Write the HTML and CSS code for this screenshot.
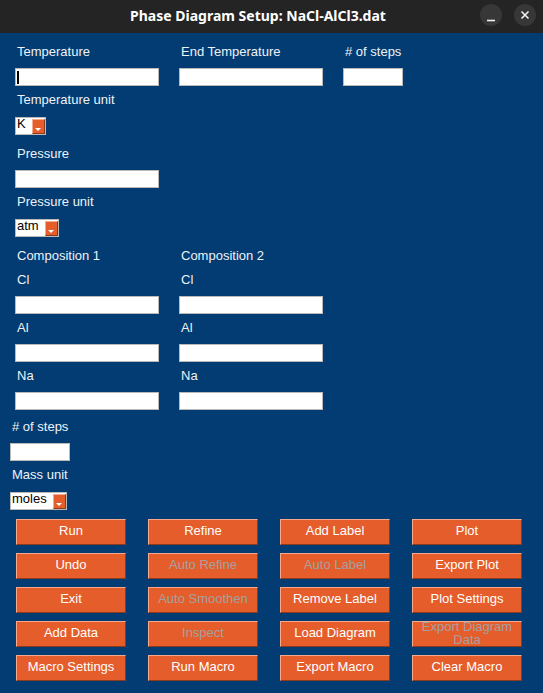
FILE: index.html
```html
<!DOCTYPE html>
<html>
<head>
<meta charset="utf-8">
<title>Phase Diagram Setup</title>
<link rel="stylesheet" href="styles.css">
</head>
<body>
<div class="window">
  <header class="titlebar">
    <div class="title">Phase Diagram Setup: NaCl-AlCl3.dat</div>
    <div class="controls">
      <span class="ctl"><svg width="22" height="22" viewBox="0 0 22 22"><path d="M7 16.5h8" stroke="#f2f2f2" stroke-width="1.6"/></svg></span>
      <span class="ctl"><svg width="22" height="22" viewBox="0 0 22 22"><path d="M7.5 7.5l7 7M14.5 7.5l-7 7" stroke="#f2f2f2" stroke-width="1.6"/></svg></span>
    </div>
  </header>

  <main class="content">
    <section class="form form-top">
      <div class="grid3 lbl-row first">
        <div class="lbl">Temperature</div>
        <div class="lbl">End Temperature</div>
        <div class="lbl"># of steps</div>
      </div>
      <div class="grid3 field-row">
        <div class="entry"><span class="caret"></span></div>
        <div class="entry"></div>
        <div class="entry"></div>
      </div>

      <div class="lbl-row"><div class="lbl">Temperature unit</div></div>
      <div class="field-row">
        <div class="menu"><span class="menu-text">K</span><span class="indicator"></span></div>
      </div>

      <div class="lbl-row gap-12"><div class="lbl">Pressure</div></div>
      <div class="grid3 field-row"><div class="entry"></div></div>

      <div class="lbl-row"><div class="lbl">Pressure unit</div></div>
      <div class="field-row">
        <div class="menu"><span class="menu-text">atm</span><span class="indicator"></span></div>
      </div>

      <div class="grid3 lbl-row gap-12">
        <div class="lbl">Composition 1</div>
        <div class="lbl">Composition 2</div>
      </div>
      <div class="grid3 lbl-row gap-8">
        <div class="lbl">Cl</div>
        <div class="lbl">Cl</div>
      </div>
      <div class="grid3 field-row">
        <div class="entry"></div>
        <div class="entry"></div>
      </div>
      <div class="grid3 lbl-row">
        <div class="lbl">Al</div>
        <div class="lbl">Al</div>
      </div>
      <div class="grid3 field-row">
        <div class="entry"></div>
        <div class="entry"></div>
      </div>
      <div class="grid3 lbl-row">
        <div class="lbl">Na</div>
        <div class="lbl">Na</div>
      </div>
      <div class="grid3 field-row">
        <div class="entry"></div>
        <div class="entry"></div>
      </div>
    </section>

    <section class="form form-bottom">
      <div class="lbl-row gap-9"><div class="lbl">#&nbsp;of steps</div></div>
      <div class="field-row"><div class="entry steps"></div></div>
      <div class="lbl-row"><div class="lbl">Mass unit</div></div>
      <div class="field-row">
        <div class="menu"><span class="menu-text">moles</span><span class="indicator"></span></div>
      </div>
    </section>

    <section class="buttons">
      <div class="btn">Run</div>
      <div class="btn">Refine</div>
      <div class="btn">Add Label</div>
      <div class="btn">Plot</div>

      <div class="btn">Undo</div>
      <div class="btn disabled">Auto Refine</div>
      <div class="btn disabled">Auto Label</div>
      <div class="btn">Export Plot</div>

      <div class="btn">Exit</div>
      <div class="btn disabled">Auto Smoothen</div>
      <div class="btn">Remove Label</div>
      <div class="btn">Plot Settings</div>

      <div class="btn">Add Data</div>
      <div class="btn disabled">Inspect</div>
      <div class="btn">Load Diagram</div>
      <div class="btn disabled two-line">Export Diagram Data</div>

      <div class="btn">Macro Settings</div>
      <div class="btn">Run Macro</div>
      <div class="btn">Export Macro</div>
      <div class="btn">Clear Macro</div>
    </section>
  </main>
</div>
</body>
</html>
```

FILE: styles.css
```css
* { box-sizing: border-box; }

html, body {
  margin: 0;
  padding: 0;
  width: 543px;
  height: 693px;
  overflow: hidden;
  background: #023c72;
}

.window {
  width: 543px;
  height: 693px;
  background: #023c72;
  font-family: "Liberation Sans", Arial, sans-serif;
  font-size: 13px;
}

/* title bar */
.titlebar {
  height: 33px;
  background: #242424;
  display: flex;
  align-items: center;
}

.title {
  flex: 1;
  padding-left: 38px;
  text-align: center;
  color: #ffffff;
  font-family: "Noto Sans", "DejaVu Sans", sans-serif;
  font-weight: 700;
  font-size: 14px;
  line-height: 20px;
  margin-top: -1px;
}

.controls {
  display: flex;
  gap: 12px;
  padding-right: 7px;
  padding-left: 2px;
  margin-top: -3px;
}

.ctl {
  width: 22px;
  height: 22px;
  border-radius: 50%;
  background: #373737;
  display: block;
}

.ctl svg { display: block; }

/* form */
.form-top { padding-left: 15px; }
.form-bottom { padding-left: 10px; }

.grid3 {
  display: grid;
  grid-template-columns: 144px 144px 60px;
  column-gap: 20px;
}

.lbl-row { margin-top: 6px; height: 16px; }
.lbl-row.first { margin-top: 11px; }
.lbl-row.gap-12 { margin-top: 12px; }
.lbl-row.gap-9 { margin-top: 9px; }
.lbl-row.gap-8 { margin-top: 8px; }

.lbl {
  height: 16px;
  line-height: 16px;
  padding-left: 2px;
  color: #eef2f7;
  white-space: nowrap;
}

.field-row { margin-top: 8px; height: 18px; }

.entry {
  height: 18px;
  background: #ffffff;
  border: 1px solid #b9b9b9;
  display: flex;
  align-items: center;
  padding-left: 1px;
}

.entry.steps { width: 60px; }

.caret {
  width: 2px;
  height: 13px;
  background: #000000;
}

.menu {
  display: inline-flex;
  align-items: flex-start;
  height: 18px;
  background: #ffffff;
  border: 1px solid #b9b9b9;
  padding-left: 1px;
}

.menu-text {
  color: #000000;
  line-height: 12px;
  margin-right: 6px;
}

.indicator {
  width: 13px;
  height: 15px;
  margin-top: 0.5px;
  background: #e45d2b;
  border-style: solid;
  border-width: 1px;
  border-color: #f6a98c #8b3a1b #8b3a1b #f6a98c;
  display: flex;
  justify-content: center;
  align-items: flex-end;
  padding-bottom: 2px;
}

.indicator::after {
  content: "";
  width: 0;
  height: 0;
  border-left: 3px solid transparent;
  border-right: 3px solid transparent;
  border-top: 3px solid #ffffff;
}

/* buttons */
.buttons {
  margin-top: 10px;
  padding-left: 16px;
  display: grid;
  grid-template-columns: repeat(4, 110px);
  grid-auto-rows: 26px;
  column-gap: 22px;
  row-gap: 8px;
}

.btn {
  height: 26px;
  background: #e45d2b;
  border-style: solid;
  border-width: 1px;
  border-color: #f6a98c #8b3a1b #8b3a1b #f6a98c;
  color: #ffffff;
  display: flex;
  align-items: center;
  justify-content: center;
  text-align: center;
  padding-bottom: 3px;
  white-space: nowrap;
  overflow: hidden;
}

.btn.disabled { color: #a6a0a0; }

.btn.two-line {
  white-space: normal;
  line-height: 13px;
  padding: 0 4px 2px 4px;
}
```
